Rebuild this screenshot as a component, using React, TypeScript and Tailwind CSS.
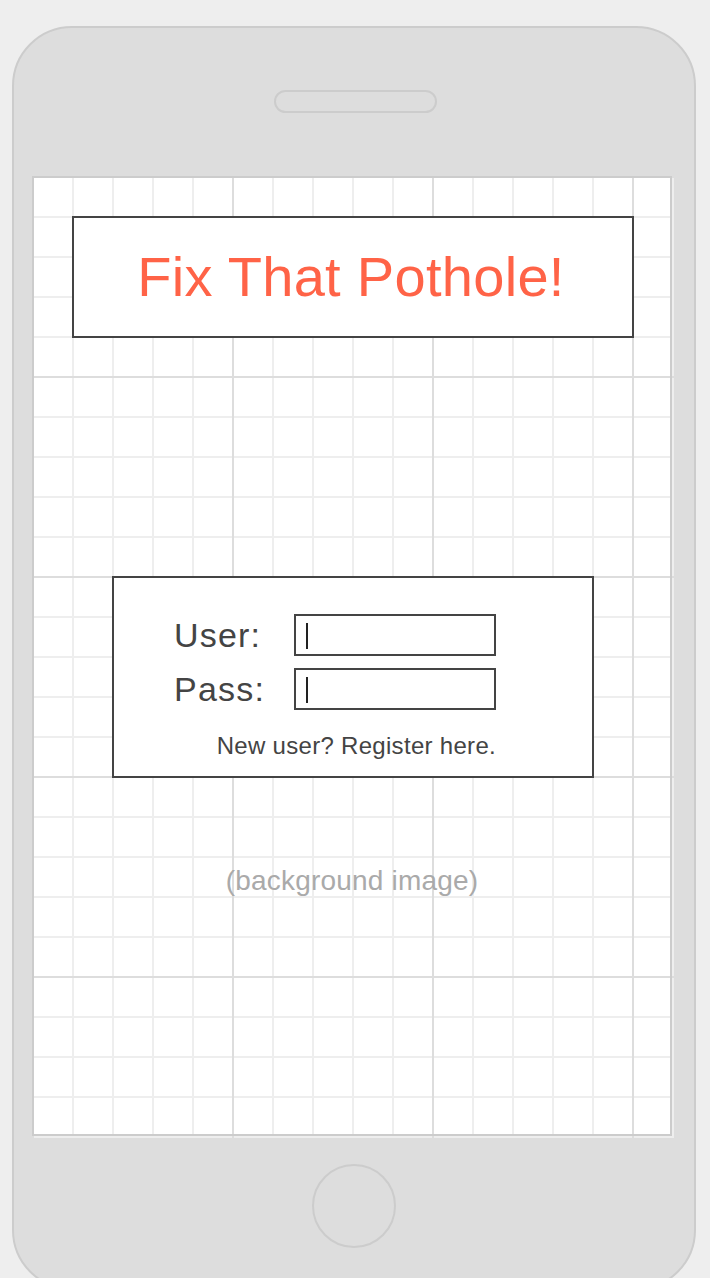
const Cursor = () => <div className="mt-[7px] ml-[10px] h-[26px] w-[2px] bg-[#222]" />;

const Field = ({ label }: { label: string }) => (
  <div className="flex items-center">
    <span className="w-[122px] pl-[2px] text-[34px] leading-[42px] tracking-[1.2px] text-[#444]">{label}</span>
    <div className="h-[42px] w-[202px] border-2 border-[#444] bg-white">
      <Cursor />
    </div>
  </div>
);

export default function App() {
  return (
    <div className="h-screen overflow-hidden bg-[#eeeeee] pt-[26px] pl-[12px] font-['Liberation_Sans',Arial,sans-serif]">
      <div className="flex h-[1264px] w-[684px] flex-col items-start rounded-[60px] border-2 border-[#cccccc] bg-[#dddddd]">
        {/* speaker */}
        <div className="mt-[62px] ml-[260px] h-[23px] w-[163px] rounded-full border-2 border-[#cccccc]" />

        {/* screen */}
        <div className="mt-[63px] ml-[18px] h-[962px] w-[642px] bg-white bg-[linear-gradient(to_right,#dddddd_2px,transparent_2px),linear-gradient(to_bottom,#dddddd_2px,transparent_2px),linear-gradient(to_right,#eeeeee_2px,transparent_2px),linear-gradient(to_bottom,#eeeeee_2px,transparent_2px)] [background-size:200px_200px,200px_200px,40px_40px,40px_40px]">
          <div className="flex h-[960px] w-[640px] flex-col items-start border-2 border-[#cccccc]">
            <div className="mt-[38px] ml-[38px] flex h-[122px] w-[562px] items-center justify-center border-2 border-[#444] bg-white">
              <span className="pr-[4px] text-[56px] leading-none tracking-[0.3px] text-[#ff6347]">Fix That Pothole!</span>
            </div>

            <div className="mt-[238px] ml-[78px] h-[202px] w-[482px] border-2 border-[#444] bg-white pt-[36px] pl-[58px]">
              <div className="flex w-[324px] flex-col gap-[12px]">
                <Field label="User:" />
                <Field label="Pass:" />
                <p className="mt-[10px] text-right text-[24px] leading-[28px] tracking-[0.3px] text-[#444]">
                  New user? Register here.
                </p>
              </div>
            </div>

            <p className="mt-[87px] w-full text-center text-[28px] leading-[32px] tracking-[0.2px] text-[#aaaaaa]">
              (background image)
            </p>
          </div>
        </div>

        {/* home button */}
        <div className="mt-[26px] ml-[298px] h-[84px] w-[84px] rounded-full border-2 border-[#cccccc]" />
      </div>
    </div>
  );
}
